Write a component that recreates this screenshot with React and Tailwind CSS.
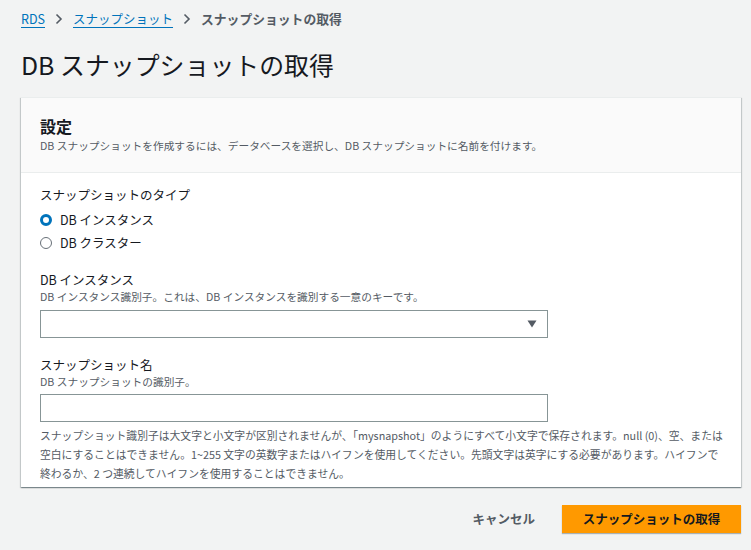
export default function App() {
  return (
    <div className="min-h-[550px] bg-[#f2f3f3] pl-[21px] pr-[10px] pt-[9px] font-['Noto_Sans_CJK_JP',sans-serif] text-[#16191f]">
      <nav className="flex items-center h-[20px] text-[12.5px] leading-[20px]">
        <a className="text-[#0073bb] underline underline-offset-[3px] decoration-[1px]">RDS</a>
        <svg width="8" height="12" viewBox="0 0 8 12" className="mx-[10px]" fill="none" stroke="#545b64" strokeWidth="1.6">
          <path d="M1.5 1.5 L6 6 L1.5 10.5" />
        </svg>
        <a className="text-[#0073bb] underline underline-offset-[3px] decoration-[1px]">スナップショット</a>
        <svg width="8" height="12" viewBox="0 0 8 12" className="mx-[10px]" fill="none" stroke="#545b64" strokeWidth="1.6">
          <path d="M1.5 1.5 L6 6 L1.5 10.5" />
        </svg>
        <span className="text-[#545b64] text-[12.8px] font-bold">スナップショットの取得</span>
      </nav>

      <h1 className="mt-[19px] text-[24.9px] leading-[32px] font-normal">DB スナップショットの取得</h1>

      <div className="mt-[17px] w-[720px] bg-white border-t border-[#eaeded] shadow-[0_1px_1px_0_rgba(0,28,36,0.3),1px_1px_1px_0_rgba(0,28,36,0.15),-1px_1px_1px_0_rgba(0,28,36,0.15)]">
        <div className="bg-[#fafafa] border-b border-[#eaeded] px-[19px] pt-[17px] pb-[18px]">
          <h2 className="text-[16px] leading-[22px] font-bold">設定</h2>
          <p className="mt-[1px] text-[10.7px] leading-[16px] text-[#545b64]">
            DB スナップショットを作成するには、データベースを選択し、DB スナップショットに名前を付けます。
          </p>
        </div>

        <div className="px-[19px] pt-[12px] pb-[4px]">
          <div className="text-[12.5px] leading-[20px]">スナップショットのタイプ</div>
          <div className="mt-[5px] flex items-center h-[20px] text-[12.5px]">
            <span className="w-[12px] h-[12px] rounded-full border-[3.5px] border-[#0073bb] bg-white mr-[8px]" />
            <span>DB インスタンス</span>
          </div>
          <div className="mt-[3px] flex items-center h-[20px] text-[12.5px]">
            <span className="w-[12px] h-[12px] rounded-full border border-[#687078] bg-white mr-[8px]" />
            <span>DB クラスター</span>
          </div>

          <div className="mt-[18px] text-[12.5px] leading-[18px]">DB インスタンス</div>
          <div className="text-[10.7px] leading-[16px] text-[#545b64]">
            DB インスタンス識別子。これは、DB インスタンスを識別する一意のキーです。
          </div>
          <div className="mt-[5px] w-[508px] h-[28px] border border-[#879596] bg-white flex items-center justify-end pr-[10px]">
            <svg width="10" height="8" viewBox="0 0 10 8">
              <path d="M0.5 0.5 H9.5 L5 7.5 Z" fill="#545b64" />
            </svg>
          </div>

          <div className="mt-[18px] text-[12.5px] leading-[18px]">スナップショット名</div>
          <div className="text-[10.7px] leading-[16px] text-[#545b64]">DB スナップショットの識別子。</div>
          <div className="mt-[4px] w-[508px] h-[28px] border border-[#879596] bg-white" />

          <p className="mt-[4px] text-[10.8px] leading-[19px] text-[#545b64] whitespace-nowrap">
            スナップショット識別子は大文字と小文字が区別されませんが、「mysnapshot」のようにすべて小文字で保存されます。null (0)、空、または
            <br />
            空白にすることはできません。1~255 文字の英数字またはハイフンを使用してください。先頭文字は英字にする必要があります。ハイフンで
            <br />
            終わるか、2 つ連続してハイフンを使用することはできません。
          </p>
        </div>
      </div>

      <div className="mt-[18px] w-[720px] flex justify-end items-center gap-[7px]">
        <button className="h-[28px] px-[20px] text-[12.5px] font-bold text-[#545b64]">キャンセル</button>
        <button className="h-[28px] w-[179px] bg-[#ff9900] text-[12.5px] font-bold text-[#16191f] shadow-[0_1px_1px_0_rgba(0,28,36,0.3)]">
          スナップショットの取得
        </button>
      </div>
    </div>
  );
}
